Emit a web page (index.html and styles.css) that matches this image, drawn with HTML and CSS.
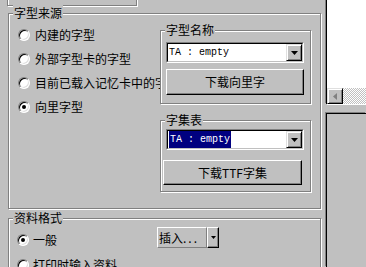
FILE: index.html
```html
<!doctype html>
<html>
<head>
<meta charset="utf-8">
<title>字型来源</title>
<link rel="stylesheet" href="styles.css">
</head>
<body>
<div class="screen">
	<div class="main">
		<div class="prev-group"></div>

		<div class="group source">
			<div class="group-title">字型来源</div>
			<div class="group-body">
				<div class="options">
					<div class="option"><span class="radio"></span>内建的字型</div>
					<div class="option"><span class="radio"></span>外部字型卡的字型</div>
					<div class="option"><span class="radio"></span>目前已载入记忆卡中的字型</div>
					<div class="option"><span class="radio checked"></span>向里字型</div>
				</div>
				<div class="font-side">
					<div class="group name-group">
						<div class="group-title">字型名称</div>
						<div class="combo">
							<div class="combo-inner">
								<span class="combo-text">TA : empty</span>
								<span class="drop"><svg width="7" height="4" viewBox="0 0 7 4"><path d="M0 0h7L3.5 4z" fill="#000"/></svg></span>
							</div>
						</div>
						<button class="btn btn-name">下载向里字</button>
					</div>
					<div class="group set-group">
						<div class="group-title">字集表</div>
						<div class="combo">
							<div class="combo-inner">
								<span class="combo-text"><span class="selected">TA : empty</span></span>
								<span class="drop"><svg width="7" height="4" viewBox="0 0 7 4"><path d="M0 0h7L3.5 4z" fill="#000"/></svg></span>
							</div>
						</div>
						<button class="btn btn-set">下载TTF字集</button>
					</div>
				</div>
			</div>
		</div>

		<div class="group format">
			<div class="group-title">资料格式</div>
			<div class="group-body format-body">
				<div class="format-options">
					<div class="option low"><span class="radio checked"></span>一般</div>
					<div class="option low"><span class="radio"></span>打印时输入资料</div>
				</div>
				<div class="insert">
					<span class="insert-text">插入<span class="dots">...</span></span>
					<span class="insert-arrow"><svg width="5" height="3" viewBox="0 0 5 3"><path d="M0 0h5L2.5 3z" fill="#000"/></svg></span>
				</div>
			</div>
		</div>
	</div>

	<div class="side">
		<div class="view">
			<div class="hscroll">
				<span class="scroll-btn"><svg width="4" height="7" viewBox="0 0 4 7"><path d="M4 0v7L0 3.5z" fill="#808080"/></svg></span>
				<span class="track"></span>
			</div>
		</div>
		<div class="panel"></div>
	</div>
</div>
</body>
</html>
```
FILE: styles.css
```css
*{margin:0;padding:0;box-sizing:border-box;}
html,body{width:366px;height:267px;overflow:hidden;}
body{background:#c0c0c0;font-family:"Noto Sans CJK SC","Liberation Sans",sans-serif;font-size:12px;line-height:16px;color:#000;}

.screen{display:flex;height:267px;}
.main{width:322px;flex:none;}
.side{flex:1;padding-left:4px;display:flex;flex-direction:column;}

/* etched group box */
.group{border:1px solid #808080;box-shadow:inset 1px 1px 0 #fff,1px 1px 0 #fff;}
.group-title{width:fit-content;margin:-9px 0 -7px 4px;padding:0 1px;line-height:16px;background:#c0c0c0;white-space:nowrap;}

.prev-group{margin:-2px 0 0 7px;width:130px;height:8px;border:1px solid #808080;box-shadow:inset 1px 1px 0 #fff,1px 1px 0 #fff;}

.source{margin:7px 0 0 8px;width:313px;height:196px;}
.group-body{display:flex;}

.options{width:151px;padding-top:9px;overflow:hidden;}
.option{height:24px;display:flex;align-items:center;white-space:nowrap;}
.option.low{height:25px;}

.radio{width:12px;height:12px;flex:none;border-radius:50%;margin:0 5px 0 9px;border:1px solid;border-color:#808080 #fff #fff #808080;box-shadow:inset 1px 1px 0 #000,inset -1px -1px 0 #dfdfdf;background:#fff;position:relative;}
.low .radio{margin:0 4px 0 8px;}
.radio.checked:after{content:"";position:absolute;left:3px;top:3px;width:4px;height:4px;border-radius:50%;background:#000;}

.font-side{width:151px;}
.name-group{margin-top:16px;height:74px;}
.set-group{margin-top:16px;height:72px;}

.combo{width:138px;height:21px;margin:11px 0 0 5px;border:1px solid;border-color:#808080 #fff #fff #808080;}
.set-group .combo{margin-top:8px;}
.combo-inner{height:100%;display:flex;border:1px solid;border-color:#000 #c0c0c0 #c0c0c0 #000;background:#fff;}
.combo-text{flex:1;padding-left:1px;font-family:"Liberation Mono",monospace;font-size:10px;line-height:17px;white-space:pre;}
.selected{display:inline-block;height:17px;padding:0 1px 0 1px;background:#000080;color:#fff;}
.drop{width:16px;flex:none;display:flex;align-items:center;justify-content:center;border:1px solid;border-color:#dfdfdf #000 #000 #dfdfdf;box-shadow:inset 1px 1px 0 #fff,inset -1px -1px 0 #808080;background:#c0c0c0;}

.btn{display:block;font:inherit;color:#000;background:#c0c0c0;border:1px solid;border-color:#fff #000 #000 #fff;box-shadow:inset -1px -1px 0 #808080;}
.btn-name{width:138px;height:26px;margin:6px 0 0 5px;}
.btn-set{width:139px;height:25px;margin:10px 0 0 2px;}

.format{margin:9px 0 0 8px;width:313px;height:60px;}
.format-body{padding-top:8px;align-items:flex-start;}
.format-options{width:148px;}

.insert{display:flex;height:21px;}
.insert-text{width:50px;padding-left:1px;line-height:19px;border:1px solid;border-color:#fff #808080 #808080 #fff;}
.dots{letter-spacing:2px;}
.insert-arrow{width:12px;display:flex;align-items:center;justify-content:center;border:1px solid;border-color:#fff #000 #000 #fff;box-shadow:inset -1px -1px 0 #808080;}

.view{margin-top:-2px;height:106px;background:#fff;border-top:1px solid #000;border-left:1px solid #000;box-shadow:-1px -1px 0 #808080,1px 1px 0 #fff;display:flex;flex-direction:column;justify-content:flex-end;}
.hscroll{height:16px;display:flex;}
.scroll-btn{width:16px;flex:none;display:flex;align-items:center;justify-content:center;border:1px solid;border-color:#dfdfdf #000 #000 #dfdfdf;box-shadow:inset 1px 1px 0 #fff,inset -1px -1px 0 #808080;background:#c0c0c0;}
.track{flex:1;background:conic-gradient(#fff 25%,#c0c0c0 0 50%,#fff 0 75%,#c0c0c0 0);background-size:2px 2px;}
.panel{margin-top:9px;flex:1;border-top:1px solid #000;border-left:1px solid #000;box-shadow:-1px -1px 0 #808080;}
```
